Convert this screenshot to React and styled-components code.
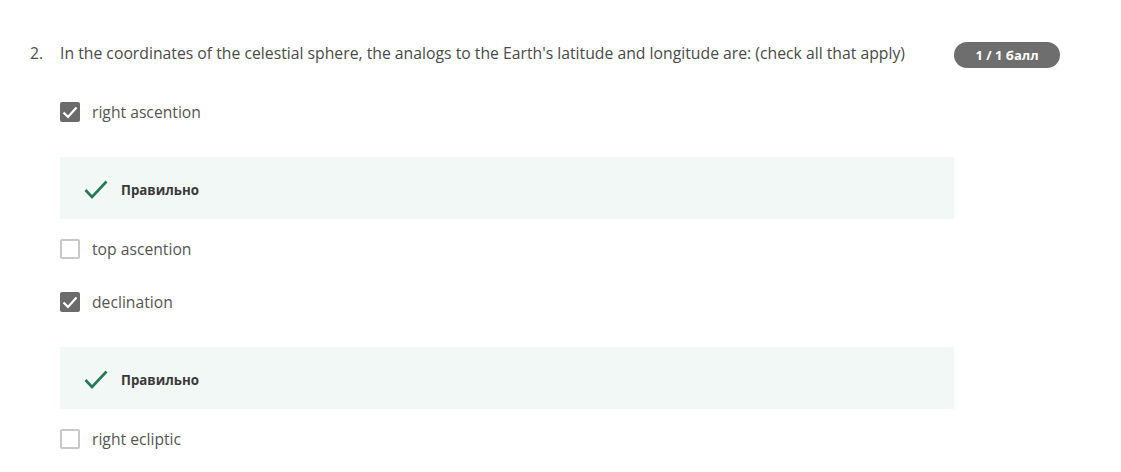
import React from "react";
import styled, { createGlobalStyle } from "styled-components";

const GlobalStyle = createGlobalStyle`
  body {
    margin: 0;
    background: #ffffff;
    font-family: "Open Sans", "Noto Sans", sans-serif;
  }
`;

const Page = styled.div`
  padding: 42px 0 0 30px;
  width: 1030px;
`;

const Header = styled.div`
  display: flex;
  align-items: flex-start;
`;

const Number = styled.div`
  width: 30px;
  font-size: 15.7px;
  line-height: 22px;
  color: #4a4a4a;
`;

const QuestionText = styled.div`
  flex: 1;
  font-size: 15.75px;
  line-height: 22px;
  color: #4a4a4a;
`;

const Badge = styled.div`
  width: 106px;
  height: 26px;
  border-radius: 13px;
  background: #6e6e6e;
  color: #fff;
  font-size: 13px;
  font-weight: 700;
  display: flex;
  align-items: center;
  justify-content: center;
`;

const List = styled.div`
  display: flex;
  flex-direction: column;
  gap: 20px;
  margin: 34px 0 0 30px;
`;

const Item = styled.div`
  display: flex;
  flex-direction: column;
  gap: 22px;
`;

const Row = styled.div`
  display: flex;
  align-items: flex-start;
  gap: 12px;
  height: 33px;
`;

const Box = styled.div`
  width: 20px;
  height: 20px;
  box-sizing: border-box;
  border-radius: 2px;
  display: flex;
  align-items: center;
  justify-content: center;
  background: ${(p) => (p.$checked ? "#6b6b6b" : "#fff")};
  border: ${(p) => (p.$checked ? "none" : "2px solid #c8c8c8")};
`;

const Label = styled.div`
  font-size: 15.7px;
  line-height: 20px;
  color: #555;
`;

const Feedback = styled.div`
  width: 894px;
  height: 62px;
  background: #f2f8f6;
  display: flex;
  align-items: center;
  gap: 13px;
  padding: 3px 0 0 24px;
  box-sizing: border-box;
`;

const FeedbackText = styled.div`
  font-size: 13.3px;
  font-weight: 700;
  color: #3a3a3a;
`;

const options = [
  { text: "right ascention", checked: true },
  { text: "top ascention", checked: false },
  { text: "declination", checked: true },
  { text: "right ecliptic", checked: false },
];

const Tick = () => (
  <svg width="16" height="13" viewBox="0 0 16 13">
    <polyline points="1.5,6.5 6,11 14.5,1.5" fill="none" stroke="#fff" strokeWidth="2.2" />
  </svg>
);

const GreenCheck = () => (
  <svg width="24" height="19" viewBox="0 0 24 19">
    <polyline points="1.5,10 8,17 22.5,1.5" fill="none" stroke="#237b55" strokeWidth="2.6" />
  </svg>
);

export default function App() {
  return (
    <Page>
      <GlobalStyle />
      <Header>
        <Number>2.</Number>
        <QuestionText>
          In the coordinates of the celestial sphere, the analogs to the Earth's latitude and
          longitude are: (check all that apply)
        </QuestionText>
        <Badge>1 / 1 балл</Badge>
      </Header>
      <List>
        {options.map((o) => (
          <Item key={o.text}>
            <Row>
              <Box $checked={o.checked}>{o.checked && <Tick />}</Box>
              <Label>{o.text}</Label>
            </Row>
            {o.checked && (
              <Feedback>
                <GreenCheck />
                <FeedbackText>Правильно</FeedbackText>
              </Feedback>
            )}
          </Item>
        ))}
      </List>
    </Page>
  );
}
